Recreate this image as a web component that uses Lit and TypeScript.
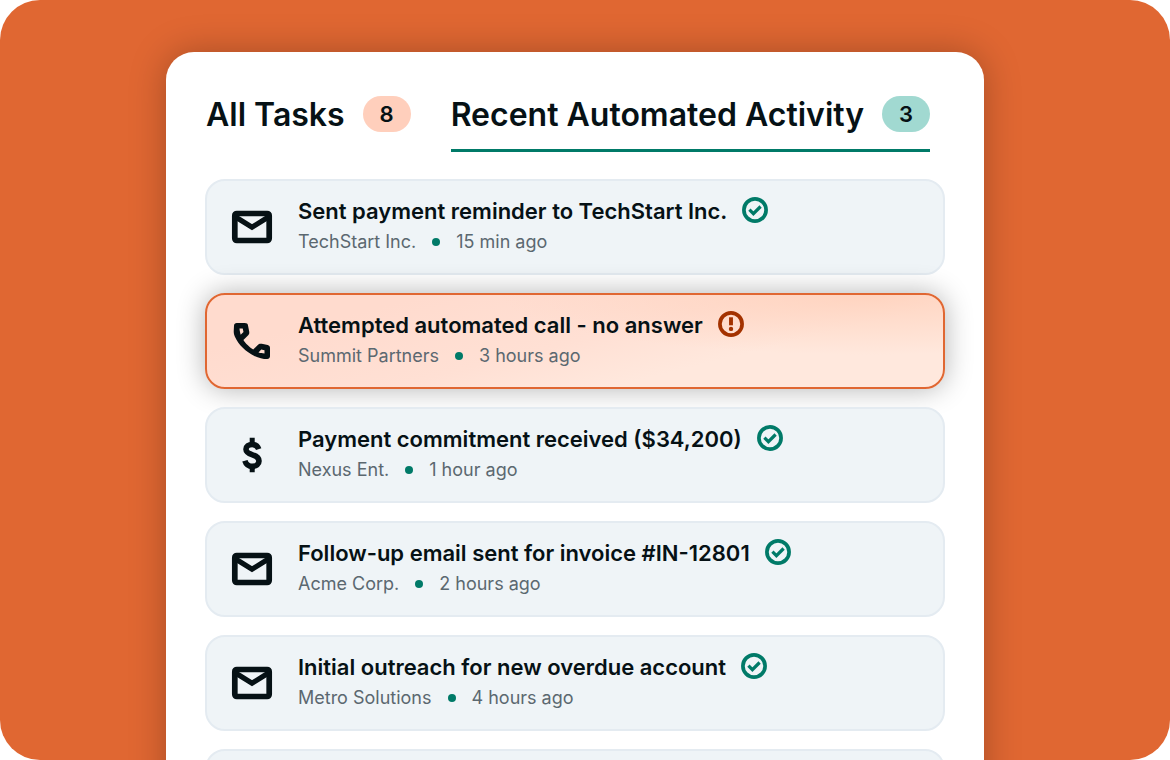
import { LitElement, html, css, svg } from "lit";
import { customElement, property, state } from "lit/decorators.js";
import { classMap } from "lit/directives/class-map.js";

type Kind = "mail" | "call" | "payment";
type Status = "done" | "alert";

interface Activity {
  kind: Kind;
  title: string;
  company: string;
  time: string;
  status: Status;
}

const ACTIVITIES: Activity[] = [
  { kind: "mail", title: "Sent payment reminder to TechStart Inc.", company: "TechStart Inc.", time: "15 min ago", status: "done" },
  { kind: "call", title: "Attempted automated call - no answer", company: "Summit Partners", time: "3 hours ago", status: "alert" },
  { kind: "payment", title: "Payment commitment received ($34,200)", company: "Nexus Ent.", time: "1 hour ago", status: "done" },
  { kind: "mail", title: "Follow-up email sent for invoice #IN-12801", company: "Acme Corp.", time: "2 hours ago", status: "done" },
  { kind: "mail", title: "Initial outreach for new overdue account", company: "Metro Solutions", time: "4 hours ago", status: "done" },
];

const KIND_ICONS = {
  mail: svg`
    <rect x="6.8" y="10.5" width="34.4" height="27" rx="2" fill="none" stroke="currentColor" stroke-width="5.7"/>
    <path d="M8 14.300 24 24.300 40 14.300" fill="none" stroke="currentColor" stroke-width="5.2"/>`,
  call: svg`
    <path fill="currentColor" fill-rule="evenodd" d="M39.2 42C35 42 30.7 41 26.4 38.9 22.1 36.8 18.2 34.1 14.800 30.700 11.300 27.400 8.700 23.600 6.800 19.400 5 15.200 6 12.500 6 8.700 6 7.900 6.300 7.300 6.800 6.800 7.300 6.300 7.900 6 8.700 6H16.800C17.700 6 18.400 6.200 19 6.600 19.600 7.100 19.900 7.700 20 8.500L21.200 14.600C21.300 15.500 21.300 16.300 21.100 16.800 21 17.300 20.600 17.800 20.200 18.200L15.400 22.900C16.700 25 18 26.600 19.600 28.100 21.300 29.900 23 31.200 25.200 32.500L29.800 27.900C30.400 27.300 31 26.900 31.700 26.700 32.400 26.600 33 26.600 33.800 26.700L39.700 28C40.400 28.200 41 28.500 41.400 29.100 41.800 29.700 42 30.300 42 31V39.200C42 40 41.700 40.700 41.200 41.200 40.700 41.700 40 42 39.200 42ZM12.700 17.700 15.500 15 14.700 11.500H11.500C11.600 12.700 11.700 13.700 11.900 14.600 12.100 15.600 12.300 16.600 12.700 17.700ZM30.500 35.400C31.600 35.700 32.500 35.900 33.500 36.100 34.400 36.300 35.300 36.400 36.500 36.500V33.300L33.200 32.600Z"/>`,
  payment: svg`
    <path d="M24.200 6.700V13M24.200 36V41.300" fill="none" stroke="currentColor" stroke-width="5"/>
    <path d="M30.700 18.200C29.700 15.200 27.500 13.500 24.200 13.500 20.600 13.500 18 15.300 18 18.300 18 21.300 20.500 22.500 24.500 23.800 28.900 25.200 31 27 31 30 31 33.300 28.300 35.400 24.500 35.400 20.800 35.400 18.100 33.600 16.900 29.700" fill="none" stroke="currentColor" stroke-width="5.600"/>`,
};

@customElement("status-icon")
export class StatusIcon extends LitElement {
  @property() status: Status = "done";

  static styles = css`
    :host { display: block; flex: none; }
    .icon { display: block; width: 26px; height: 26px; color: #007a68; }
    .alert { color: #a33200; }
  `;

  render() {
    const alert = this.status === "alert";
    return html`
      <svg class=${classMap({ icon: true, alert })} viewBox="0 0 26 26" role="img" aria-label=${alert ? "Needs attention" : "Completed"}>
        <circle cx="13" cy="13" r="11.100" fill="none" stroke="currentColor" stroke-width="3.700"/>
        ${alert
          ? svg`<path d="M13 6.300V14.300" stroke="currentColor" stroke-width="3.900"/><circle cx="13" cy="17.900" r="2.200" fill="currentColor"/>`
          : svg`<path d="M7.400 12.700 11.400 16.700 18.600 9.500" fill="none" stroke="currentColor" stroke-width="3.200"/>`}
      </svg>`;
  }
}

@customElement("activity-row")
export class ActivityRow extends LitElement {
  @property({ attribute: false }) activity?: Activity;

  static styles = css`
    :host { display: block; }
    .row {
      display: flex;
      align-items: center;
      gap: 22px;
      min-height: 96px;
      padding: 0 21px;
      box-sizing: border-box;
      border: 2px solid #e4ebf1;
      border-radius: 20px;
      background: #eff4f7;
    }
    .highlight {
      border-color: #e06732;
      background:
        radial-gradient(ellipse 50% 65% at 90% 0%, rgba(255, 208, 186, 0.8), rgba(255, 208, 186, 0)),
        linear-gradient(166deg, #ffdbce 20%, #ffe0d4 50%, #ffe8dd 70%);
      box-shadow: 0 0 28px rgba(0, 0, 0, 0.3);
    }
    .kind { flex: none; width: 48px; height: 48px; color: #061115; }
    .text { min-width: 0; }
    .heading { display: flex; align-items: flex-start; gap: 15px; height: 30px; }
    .title { margin: 0; font-size: 22px; font-weight: 600; line-height: 28px; color: #061115; }
    .meta {
      display: flex;
      align-items: center;
      gap: 16px;
      margin: 0;
      font-size: 18px;
      line-height: 30px;
      color: #5b6870;
    }
    .dot { width: 8px; height: 8px; border-radius: 50%; background: #007a68; }
  `;

  render() {
    const a = this.activity;
    if (!a) return html`<div class="row"></div>`;
    return html`
      <article class=${classMap({ row: true, highlight: a.status === "alert" })}>
        <svg class="kind" viewBox="0 0 48 48" aria-hidden="true">${KIND_ICONS[a.kind]}</svg>
        <div class="text">
          <div class="heading">
            <h2 class="title">${a.title}</h2>
            <status-icon .status=${a.status}></status-icon>
          </div>
          <p class="meta"><span>${a.company}</span><span class="dot"></span><span>${a.time}</span></p>
        </div>
      </article>`;
  }
}

@customElement("app-root")
export class AppRoot extends LitElement {
  @state() private tab = "recent";

  static styles = css`
    :host {
      display: block;
      font-family: Inter, "Liberation Sans", sans-serif;
    }
    .stage {
      height: 100vh;
      box-sizing: border-box;
      padding: 52px 186px 0 166px;
      overflow: hidden;
      border-radius: 40px;
      background: #e06732;
    }
    .panel {
      padding: 43px 39px;
      border-radius: 28px;
      background: #fff;
      box-shadow: 0 0 36px rgba(0, 0, 0, 0.26);
    }
    .tabs { display: flex; gap: 40px; padding-left: 1px; }
    .tab {
      display: flex;
      align-items: center;
      gap: 18px;
      padding: 0 0 16px;
      border: 0;
      border-bottom: 3px solid transparent;
      background: none;
      color: #061115;
      font: 600 32px/36px Inter, "Liberation Sans", sans-serif;
      white-space: nowrap;
      cursor: pointer;
    }
    .label { padding-top: 2px; }
    .active { border-color: #007a68; }
    .badge {
      width: 48px;
      border-radius: 18px;
      background: #ffcfbc;
      font-size: 22px;
      text-align: center;
    }
    .teal { background: #a1d9d1; }
    .list {
      display: flex;
      flex-direction: column;
      gap: 18px;
      margin: 27px 0 0;
      padding: 0;
      list-style: none;
    }
  `;

  private renderTab(id: string, label: string, count: number) {
    const active = this.tab === id;
    return html`
      <button class=${classMap({ tab: true, active })} role="tab" aria-selected=${active ? "true" : "false"} @click=${() => (this.tab = id)}>
        <span class="label">${label}</span><span class=${classMap({ badge: true, teal: id === "recent" })}>${count}</span>
      </button>`;
  }

  render() {
    return html`
      <main class="stage">
        <section class="panel">
          <div class="tabs" role="tablist">
            ${this.renderTab("all", "All Tasks", 8)}
            ${this.renderTab("recent", "Recent Automated Activity", 3)}
          </div>
          <ul class="list">
            ${ACTIVITIES.map((a) => html`<li><activity-row .activity=${a}></activity-row></li>`)}
            <li><activity-row></activity-row></li>
          </ul>
        </section>
      </main>`;
  }
}
